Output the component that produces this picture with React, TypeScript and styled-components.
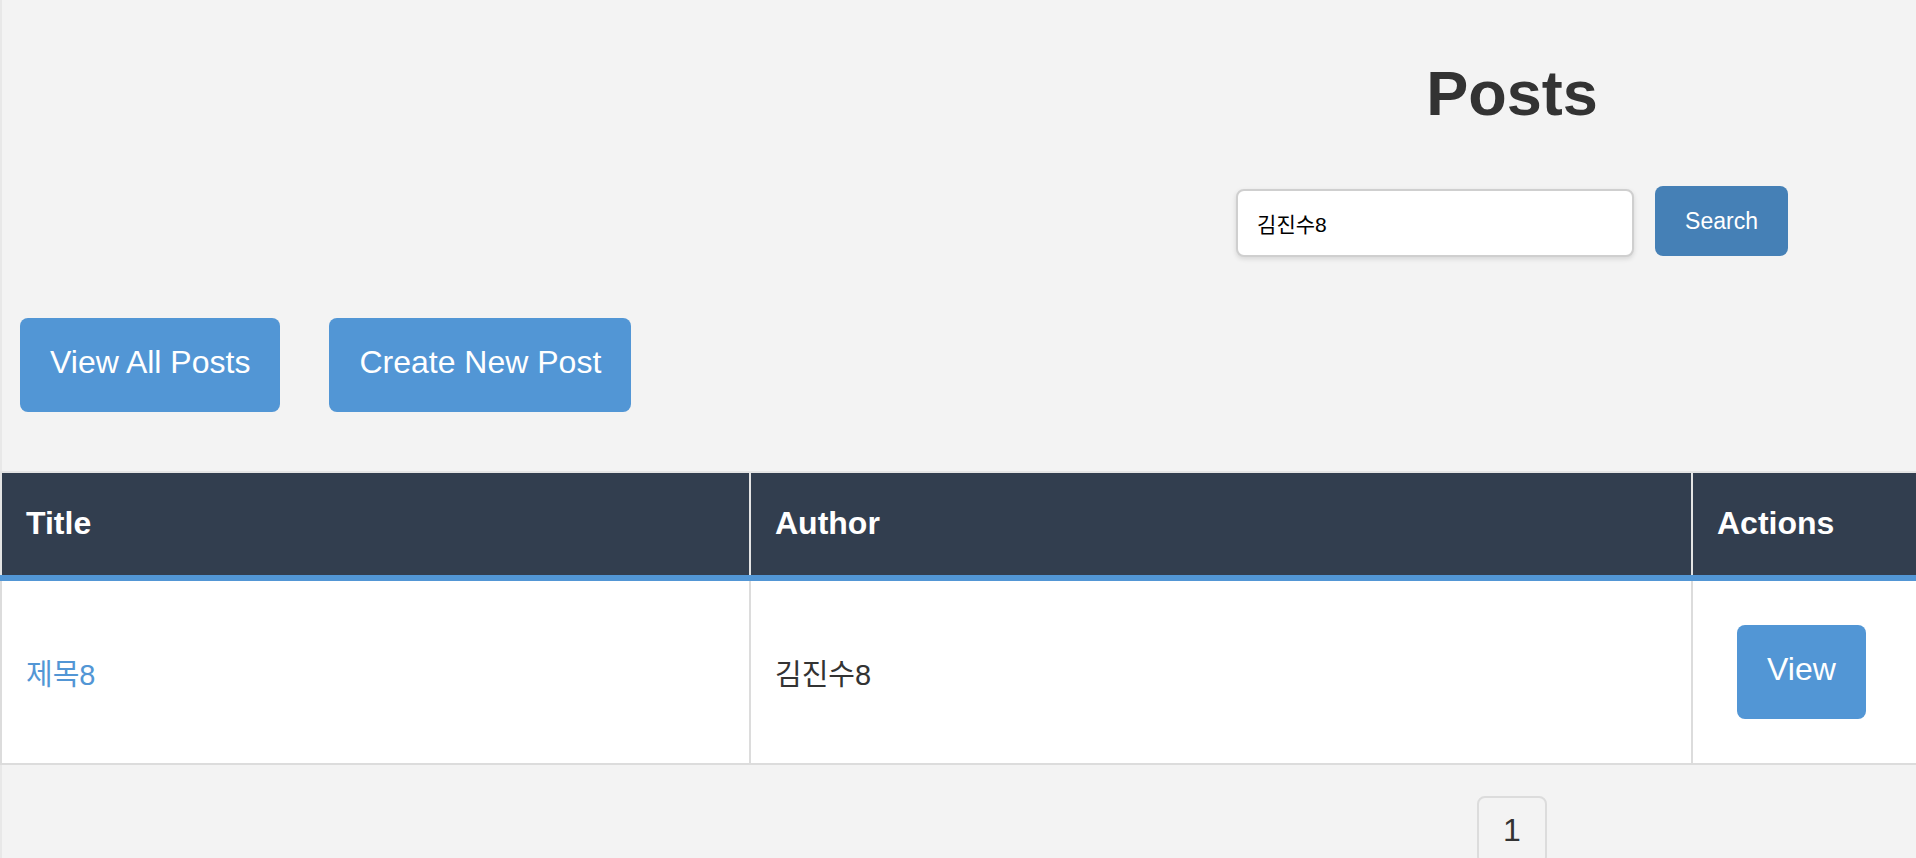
import React from "react";
import styled, { createGlobalStyle } from "styled-components";

const GlobalStyle = createGlobalStyle`
  html, body {
    margin: 0;
    padding: 0;
    overflow: hidden;
    background: #f3f3f3;
  }
  body {
    font-family: "Liberation Sans", "Noto Sans CJK KR", Arial, sans-serif;
    color: #333;
  }
  * { box-sizing: border-box; }
`;

const Page = styled.div`
  width: 3024px;
  min-height: 858px;
  background: #f3f3f3;
  box-shadow: inset 2px 0 0 #e8e8e8;
`;

const Header = styled.header`
  display: flex;
  flex-direction: column;
  align-items: center;
`;

const Title = styled.h1`
  margin: 57px 0 0;
  font-size: 63px;
  line-height: 72px;
  font-weight: 700;
  color: #333;
`;

const SearchForm = styled.form`
  display: flex;
  align-items: flex-start;
  justify-content: center;
  margin-top: 57px;
`;

const SearchInput = styled.input`
  width: 398px;
  height: 68px;
  margin-top: 3px;
  margin-right: 21px;
  padding: 0 19px;
  border: 2px solid #cfcfcf;
  border-radius: 8px;
  background: #fff;
  box-shadow: 0 2px 5px rgba(0, 0, 0, 0.12);
  font-family: "Liberation Sans", "Noto Sans CJK KR", sans-serif;
  font-size: 21px;
  color: #000;
  outline: none;
`;

const SearchButton = styled.button`
  height: 70px;
  padding: 0 30px;
  border: none;
  border-radius: 8px;
  background: #4580b6;
  color: #fff;
  font-family: "Liberation Sans", sans-serif;
  font-size: 23px;
  cursor: pointer;
`;

const ActionBar = styled.div`
  display: flex;
  gap: 9px;
  margin-top: 41px;
`;

const PrimaryButton = styled.button`
  display: inline-block;
  margin: 20px;
  padding: 26px 30px 32px;
  border: none;
  border-radius: 8px;
  background: #5296d5;
  color: #fff;
  font-family: "Liberation Sans", sans-serif;
  font-size: 32px;
  line-height: 36px;
  white-space: nowrap;
  cursor: pointer;
`;

const PostTable = styled.table`
  width: 100%;
  margin-top: 39px;
  border-collapse: collapse;
  table-layout: fixed;
  border: 2px solid #dcdcdc;
  background: #fff;
`;

const HeadCell = styled.th`
  padding: 32px 24px 33px;
  background: #323e4f;
  color: #fff;
  font-size: 32px;
  line-height: 37px;
  font-weight: 700;
  text-align: left;
  border: 2px solid #e4e4e4;
  border-bottom: 6px solid #5296d5;
`;

const BodyCell = styled.td`
  padding: 24px;
  border: 2px solid #dcdcdc;
  vertical-align: middle;
  font-family: "Liberation Sans", "Noto Sans CJK KR", sans-serif;
  font-size: 29px;
  color: #333;
`;

const TitleLink = styled.a`
  color: #5296d5;
  text-decoration: none;
  font-size: 29px;
`;

const Pagination = styled.nav`
  display: flex;
  justify-content: center;
  margin-top: 31px;
`;

const PageButton = styled.button`
  padding: 14px 24px;
  border: 2px solid #dcdcdc;
  border-radius: 8px;
  background: #f3f3f3;
  color: #333;
  font-family: "Liberation Sans", sans-serif;
  font-size: 32px;
  line-height: 37px;
`;

export default function App() {
  return (
    <>
      <GlobalStyle />
      <Page>
        <Header>
          <Title>Posts</Title>
          <SearchForm onSubmit={(e) => e.preventDefault()}>
            <SearchInput type="text" defaultValue="김진수8" />
            <SearchButton type="submit">Search</SearchButton>
          </SearchForm>
        </Header>
        <ActionBar>
          <PrimaryButton>View All Posts</PrimaryButton>
          <PrimaryButton>Create New Post</PrimaryButton>
        </ActionBar>
        <PostTable>
          <colgroup>
            <col style={{ width: 749 }} />
            <col style={{ width: 942 }} />
            <col />
          </colgroup>
          <thead>
            <tr>
              <HeadCell>Title</HeadCell>
              <HeadCell>Author</HeadCell>
              <HeadCell>Actions</HeadCell>
            </tr>
          </thead>
          <tbody>
            <tr>
              <BodyCell>
                <TitleLink href="#">제목8</TitleLink>
              </BodyCell>
              <BodyCell>김진수8</BodyCell>
              <BodyCell>
                <PrimaryButton>View</PrimaryButton>
              </BodyCell>
            </tr>
          </tbody>
        </PostTable>
        <Pagination>
          <PageButton>1</PageButton>
        </Pagination>
      </Page>
    </>
  );
}
